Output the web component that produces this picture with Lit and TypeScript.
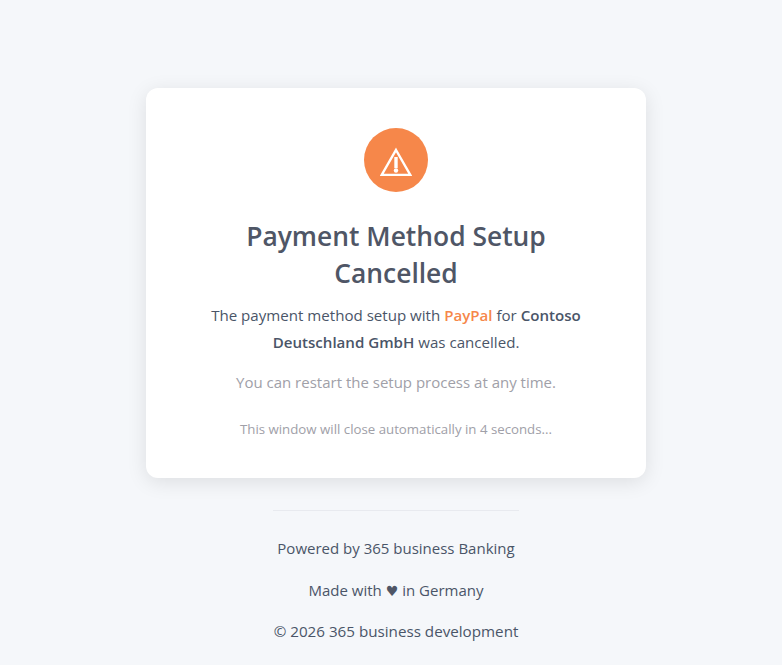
import { LitElement, html, css } from 'lit';
import { customElement } from 'lit/decorators.js';

@customElement('app-root')
export class AppRoot extends LitElement {
  static styles = css`
    :host {
      display: block;
      min-height: 665px;
      background: #f5f7fa;
      font-family: 'Open Sans', 'Noto Sans', sans-serif;
      color: #4a5568;
    }
    .page {
      display: flex;
      flex-direction: column;
      align-items: center;
      padding-top: 88px;
      padding-left: 10px;
    }
    .card {
      box-sizing: border-box;
      width: 500px;
      height: 390px;
      padding: 40px;
      background: #fff;
      border-radius: 12px;
      box-shadow: 0 4px 20px rgba(0, 0, 0, 0.1);
      text-align: center;
    }
    .icon {
      width: 64px;
      height: 64px;
      margin: 0 auto 26px;
      border-radius: 50%;
      background: #f6874a;
      display: flex;
      align-items: center;
      justify-content: center;
    }
    h1 {
      margin: 0 0 10px;
      font-size: 26.4px;
      line-height: 37px;
      font-weight: 600;
      color: #4f5666;
    }
    p {
      margin: 0;
    }
    .message {
      font-size: 15.1px;
      line-height: 27px;
      margin-bottom: 13px;
    }
    .message b {
      font-weight: 600;
    }
    .brand {
      color: #f6874a;
      font-weight: 600;
    }
    .hint {
      font-size: 15px;
      line-height: 27px;
      color: #a0a0a8;
      margin-bottom: 23px;
    }
    .countdown {
      font-size: 13.25px;
      line-height: 20px;
      color: #a0a0a8;
    }
    footer {
      width: 246px;
      margin-top: 32px;
      padding-top: 25.3px;
      border-top: 1px solid #e8eaef;
      text-align: center;
      font-size: 15px;
      line-height: 24px;
    }
    footer p {
      margin-bottom: 17.25px;
      white-space: nowrap;
    }
    footer .made {
      margin-bottom: 16.5px;
    }
    footer .copyright {
      font-size: 15.2px;
    }
    .heart {
      font-family: 'DejaVu Sans', sans-serif;
      font-size: 14px;
      color: #4f5666;
    }
  `;

  render() {
    return html`
      <div class="page">
        <div class="card">
          <div class="icon">
            <svg width="32" height="32" viewBox="0 0 32 32" fill="none">
              <path d="M16 6 L30.3 31 H1.7 Z" stroke="#fff" stroke-width="2.4" stroke-linejoin="miter" />
              <path d="M16 13 V24" stroke="#fff" stroke-width="3.4" />
              <circle cx="16" cy="26.5" r="2.2" fill="#fff" />
            </svg>
          </div>
          <h1>Payment Method Setup Cancelled</h1>
          <p class="message">
            The payment method setup with <span class="brand">PayPal</span> for
            <b>Contoso Deutschland GmbH</b> was cancelled.
          </p>
          <p class="hint">You can restart the setup process at any time.</p>
          <p class="countdown">This window will close automatically in 4 seconds...</p>
        </div>
        <footer>
          <p>Powered by 365 business Banking</p>
          <p class="made">Made with <span class="heart">♥</span> in Germany</p>
          <p class="copyright">© 2026 365 business development</p>
        </footer>
      </div>
    `;
  }
}
